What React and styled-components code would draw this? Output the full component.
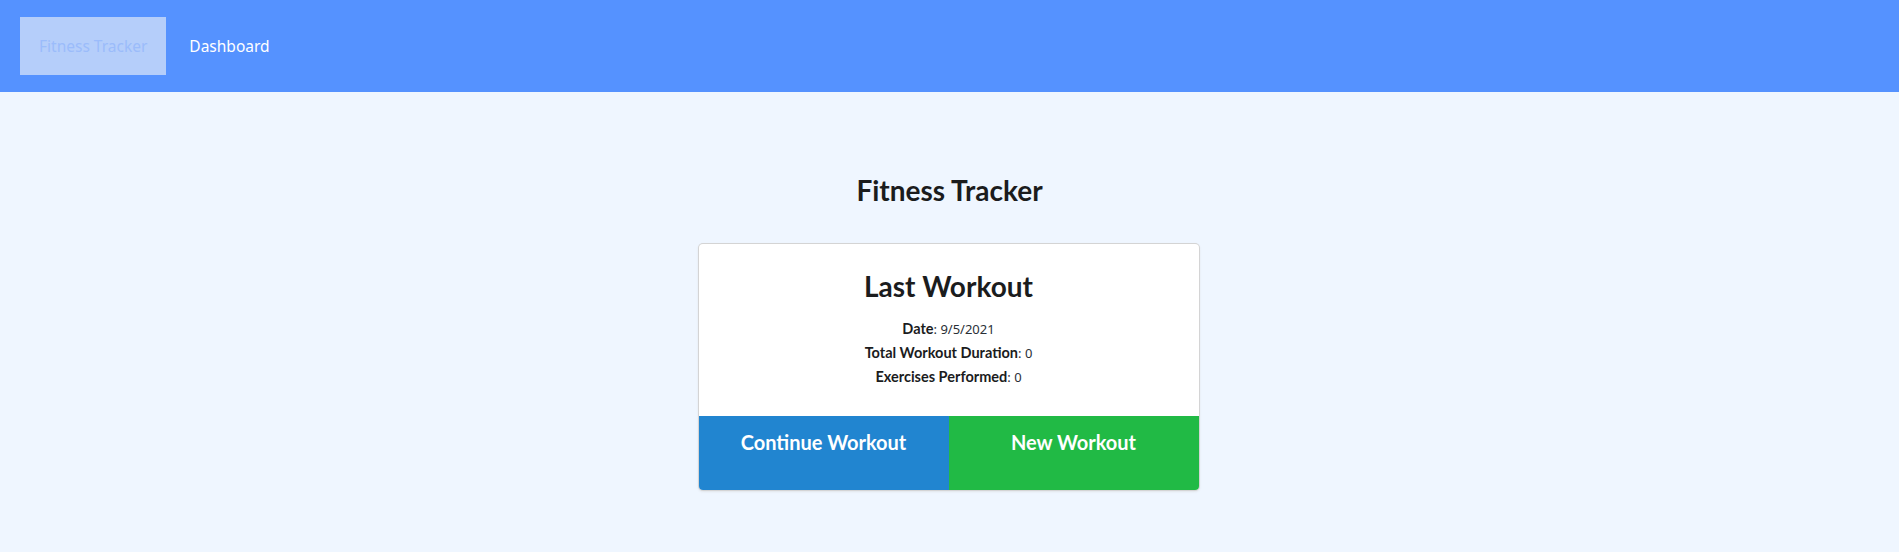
import React from "react"
import styled, { createGlobalStyle } from "styled-components"

const GlobalStyle = createGlobalStyle`
    body {
        margin: 0;
        background: #eff6ff;
        font-family: "Noto Sans", "Open Sans", sans-serif;
    }
`

const App = () => {
    const stats = [
        { label: "Date", value: "9/5/2021" },
        { label: "Total Workout Duration", value: "0" },
        { label: "Exercises Performed", value: "0" },
    ]

    return (
        <>
            <GlobalStyle />
            <Nav>
                <NavLink $active>Fitness Tracker</NavLink>
                <NavLink>Dashboard</NavLink>
            </Nav>
            <Main>
                <Title>Fitness Tracker</Title>
                <Card>
                    <CardBody>
                        <CardHeader>Last Workout</CardHeader>
                        {stats.map((s) => (
                            <Stat key={s.label}>
                                <strong>{s.label}</strong>: <span>{s.value}</span>
                            </Stat>
                        ))}
                    </CardBody>
                    <Buttons>
                        <ActionButton $color="#2185d0">Continue Workout</ActionButton>
                        <ActionButton $color="#21ba45">New Workout</ActionButton>
                    </Buttons>
                </Card>
            </Main>
        </>
    )
}

export default App

const Nav = styled.nav`
    height: 92px;
    background: #5592ff;
    display: flex;
    align-items: center;
    padding: 0 20px;
    gap: 4px;
    box-sizing: border-box;
`
const NavLink = styled.a`
    height: 58px;
    display: flex;
    align-items: center;
    padding: 0 19px;
    font-size: 15.5px;
    color: ${(p) => (p.$active ? "#9bbcfb" : "#ffffff")};
    background: ${(p) => (p.$active ? "#b5cefa" : "transparent")};
    cursor: pointer;
`
const Main = styled.main`
    display: flex;
    flex-direction: column;
    align-items: center;
    padding: 81px 0 61px;
`
const Title = styled.h1`
    margin: 0 0 37px;
    font-family: Lato, sans-serif;
    font-size: 28px;
    line-height: 34px;
    font-weight: 700;
    color: #1b1c1d;
`
const Card = styled.div`
    width: 500px;
    margin-right: 2px;
    background: #fff;
    border-radius: 4px;
    overflow: hidden;
    box-shadow: 0 1px 3px 0 #d4d4d5, 0 0 0 1px #d4d4d5;
`
const CardBody = styled.div`
    padding: 25px 16px 27px;
    text-align: center;
`
const CardHeader = styled.h2`
    margin: 0 0 13px;
    font-family: Lato, sans-serif;
    font-size: 28px;
    line-height: 35px;
    font-weight: 700;
    color: #1b1c1d;
`
const Stat = styled.div`
    font-size: 13px;
    line-height: 24px;
    color: #2a2f36;
    strong {
        font-family: Lato, sans-serif;
        font-size: 14.5px;
        font-weight: 700;
        color: #1b1c1d;
    }
`
const Buttons = styled.div`
    display: grid;
    grid-template-columns: 1fr 1fr;
`
const ActionButton = styled.button`
    height: 74px;
    border: none;
    padding: 14px 0 0;
    display: flex;
    justify-content: center;
    align-items: flex-start;
    background: ${(p) => p.$color};
    color: #fff;
    font-family: Lato, sans-serif;
    font-size: 20px;
    line-height: 24px;
    font-weight: 700;
    cursor: pointer;
`
